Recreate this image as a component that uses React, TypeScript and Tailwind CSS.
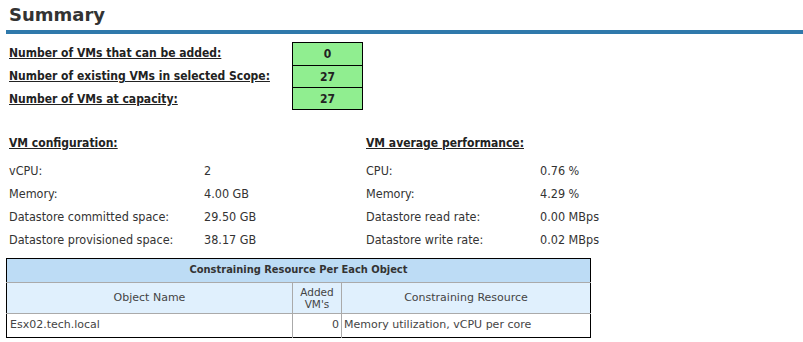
import React from "react";

const font = { fontFamily: "'DejaVu Sans Condensed', 'DejaVu Sans', sans-serif" };
const wide = { fontFamily: "'DejaVu Sans', sans-serif" };

const counts = [
  { label: "Number of VMs that can be added:", value: "0" },
  { label: "Number of existing VMs in selected Scope:", value: "27" },
  { label: "Number of VMs at capacity:", value: "27" },
];

const config = [
  ["vCPU:", "2"],
  ["Memory:", "4.00 GB"],
  ["Datastore committed space:", "29.50 GB"],
  ["Datastore provisioned space:", "38.17 GB"],
];

const perf = [
  ["CPU:", "0.76 %"],
  ["Memory:", "4.29 %"],
  ["Datastore read rate:", "0.00 MBps"],
  ["Datastore write rate:", "0.02 MBps"],
];

const Stats = ({ title, rows, keyWidth }: { title: string; rows: string[][]; keyWidth: string }) => (
  <div className="w-[357px]">
    <div className="h-[22px] text-[12px] font-bold underline text-[#222] leading-[22px]">{title}</div>
    <div className="mt-[6px]">
      {rows.map(([k, v]) => (
        <div key={k} className="flex h-[23px] items-center text-[12.5px] text-[#333]">
          <span className={`${keyWidth} shrink-0`}>{k}</span>
          <span>{v}</span>
        </div>
      ))}
    </div>
  </div>
);

export default function App() {
  return (
    <div className="w-[803px] h-[342px] bg-white overflow-hidden" style={font}>
      <h1 className="pl-[9px] pt-[1px] h-[30px] text-[18px] font-bold text-[#333]" style={wide}>
        Summary
      </h1>
      <div className="ml-[6px] h-[4px] bg-[#2f79ab]" />

      {/* counts */}
      <div className="flex pl-[9px] pt-[8px]">
        <div className="w-[283px]">
          {counts.map((c) => (
            <div key={c.label} className="h-[22.7px] flex items-center text-[12px] font-bold underline text-[#222]">
              {c.label}
            </div>
          ))}
        </div>
        <div className="w-[71px] border border-black">
          {counts.map((c, i) => (
            <div
              key={c.label}
              className={`h-[22px] flex items-center justify-center bg-[#90ee90] text-[12px] font-bold text-[#222] ${i > 0 ? "border-t border-black" : ""}`}
            >
              {c.value}
            </div>
          ))}
        </div>
      </div>

      {/* config / performance */}
      <div className="flex pl-[9px] mt-[22px]">
        <Stats title="VM configuration:" rows={config} keyWidth="w-[195px]" />
        <Stats title="VM average performance:" rows={perf} keyWidth="w-[174px]" />
      </div>

      {/* constraining resource table */}
      <table className="ml-[6px] mt-[6px] w-[585px] border border-black border-collapse text-[11px] text-[#444]">
        <thead>
          <tr className="bg-[#bddcf5] h-[24px]">
            <th colSpan={3} className="font-bold text-[#333] border-b border-[#aaa]">
              Constraining Resource Per Each Object
            </th>
          </tr>
          <tr className="bg-[#e0f0fd] h-[31px]" style={wide}>
            <th className="w-[286px] font-normal border-r border-[#aaa] border-b">Object Name</th>
            <th className="w-[49px] font-normal text-[10.5px] leading-[12px] border-r border-[#aaa] border-b">
              Added
              <br />
              VM's
            </th>
            <th className="font-normal border-b border-[#aaa]">Constraining Resource</th>
          </tr>
        </thead>
        <tbody style={wide}>
          <tr className="h-[24px]">
            <td className="pl-[3px] border-r border-[#aaa]">Esx02.tech.local</td>
            <td className="pr-[2px] text-right border-r border-[#aaa]">0</td>
            <td className="pl-[2px]">Memory utilization, vCPU per core</td>
          </tr>
        </tbody>
      </table>
    </div>
  );
}
